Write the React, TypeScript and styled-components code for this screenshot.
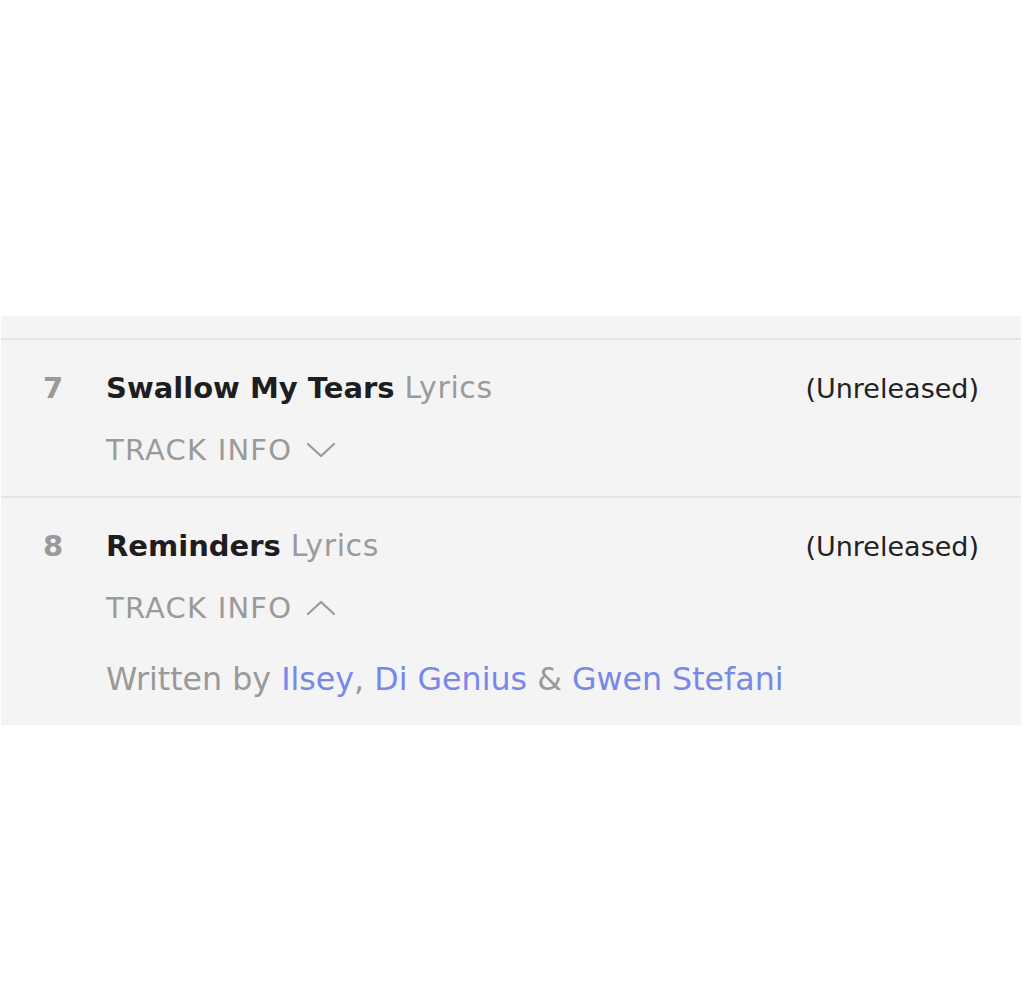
import React from "react";
import styled, { createGlobalStyle } from "styled-components";

const Global = createGlobalStyle`
  html, body { margin: 0; padding: 0; background: #ffffff; }
  body { font-family: "DejaVu Sans", "Open Sans", sans-serif; }
`;

const Page = styled.div`
  width: 1024px;
  height: 1000px;
  background: #ffffff;
  display: flex;
  flex-direction: column;
  padding-top: 316px;
  box-sizing: border-box;
`;

const Panel = styled.section`
  margin-left: 1px;
  width: 1020px;
  background: #f4f4f4;
  padding-top: 22px;
  box-sizing: border-box;
`;

const Row = styled.div<{ $pb: number }>`
  display: flex;
  align-items: flex-start;
  border-top: 2px solid #e4e4e4;
  padding: 28px 42px 0 42px;
  padding-bottom: ${(p) => p.$pb}px;
`;

const Num = styled.div`
  width: 63px;
  flex: none;
  font-size: 29px;
  line-height: 40px;
  font-weight: 700;
  color: #9a9a9a;
`;

const Body = styled.div`
  flex: 1;
  display: flex;
  flex-direction: column;
`;

const TitleLine = styled.div`
  display: flex;
  align-items: baseline;
  justify-content: space-between;
  font-size: 29px;
  line-height: 40px;
`;

const Title = styled.span`
  font-size: 29px;
  font-weight: 700;
  color: #1e1e1e;
`;

const Sub = styled.span`
  font-size: 30px;
  font-weight: 400;
  letter-spacing: 0.6px;
  color: #9b9b9b;
  margin-left: 10px;
`;

const Status = styled.span`
  font-size: 27px;
  color: #222222;
`;

const Info = styled.div`
  display: flex;
  align-items: center;
  gap: 14px;
  margin-top: 23px;
  font-size: 29px;
  line-height: 36px;
  letter-spacing: 1.2px;
  color: #9a9a9a;
`;

const Credits = styled.div`
  margin-top: 33px;
  font-size: 31.7px;
  line-height: 40px;
  color: #999999;
`;

const Link = styled.a`
  color: #7788e8;
  text-decoration: none;
`;

const Chevron = ({ up }: { up?: boolean }) => (
  <svg width="30" height="16" viewBox="0 0 30 16" fill="none">
    <path
      d={up ? "M2 14 L15 2 L28 14" : "M2 2 L15 14 L28 2"}
      stroke="#9a9a9a"
      strokeWidth="2.2"
      strokeLinecap="round"
      strokeLinejoin="round"
    />
  </svg>
);

export default function App() {
  return (
    <>
      <Global />
      <Page>
        <Panel>
          <Row $pb={28}>
            <Num>7</Num>
            <Body>
              <TitleLine>
                <span>
                  <Title>Swallow My Tears</Title>
                  <Sub>Lyrics</Sub>
                </span>
                <Status>(Unreleased)</Status>
              </TitleLine>
              <Info>
                TRACK INFO <Chevron />
              </Info>
            </Body>
          </Row>
          <Row $pb={26}>
            <Num>8</Num>
            <Body>
              <TitleLine>
                <span>
                  <Title>Reminders</Title>
                  <Sub>Lyrics</Sub>
                </span>
                <Status>(Unreleased)</Status>
              </TitleLine>
              <Info>
                TRACK INFO <Chevron up />
              </Info>
              <Credits>
                Written by <Link>Ilsey</Link>, <Link>Di Genius</Link> &amp;{" "}
                <Link>Gwen Stefani</Link>
              </Credits>
            </Body>
          </Row>
        </Panel>
      </Page>
    </>
  );
}
